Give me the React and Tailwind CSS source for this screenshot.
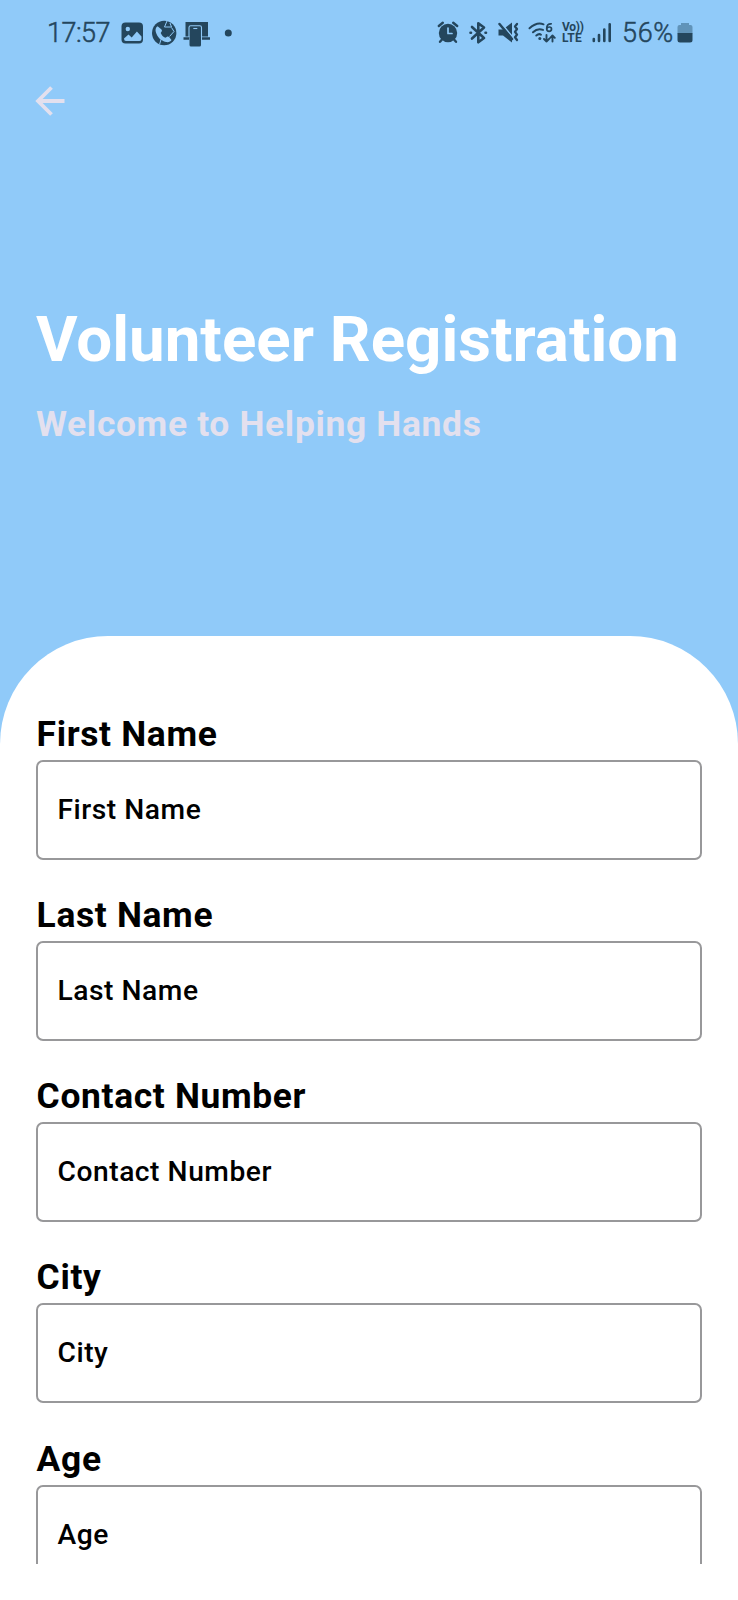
const fields = ['First Name', 'Last Name', 'Contact Number', 'City', 'Age'];

function NotificationIcons() {
  return (
    <svg className="h-[30px] w-[116px]" viewBox="120 18 116 30" fill="none">
      <rect x="121.5" y="22.500" width="21.500" height="21" rx="4" fill="#24465d" />
      <circle cx="127.800" cy="29" r="2.200" fill="#90caf9" />
      <path d="M124 38.500l4.500-4 3.200 3 5.200-6 4.600 5v2.500q0 2-2 2h-13.500q-2 0-2-2.500z" fill="#90caf9" />
      <circle cx="164.200" cy="33" r="12.200" fill="#24465d" />
      <path d="M160.300 28.400l-2.700-2.200c-2 1.300-2.400 3.400-1.800 5.800 1.400 5.200 5 8.700 10.200 10 2.400.5 4.500-.2 5.500-2l-2.400-2.900c-.6-.7-1.400-.8-2-.4l-1.700 1.100c-2.300-1-3.700-2.500-4.700-4.800l1.100-1.700c.4-.8.100-2-1.500-2.900z" fill="#90caf9" />
      <path d="M167 21l-2.500 6h7l-1.500-4M171.500 27.500l2.500 4-4.500 5M159.500 44.500l1.500-5" stroke="#90caf9" strokeWidth="1" />
      <path d="M185.500 22H208v14.500h-22.500zM183.500 37.300h5.500v2.400h-5.500zM202 37.300h8v2.400h-8z" fill="#24465d" />
      <rect x="189.500" y="25.800" width="11.500" height="20.700" rx="1.500" fill="#24465d" />
      <path d="M189 37v-9.500q0-1.700 1.700-1.700h9.100q1.700 0 1.700 1.700V37" stroke="#90caf9" strokeWidth="1.100" />
      <path d="M193.300 28.500h4" stroke="#90caf9" strokeWidth="1.100" />
      <circle cx="228.300" cy="33" r="3.500" fill="#24465d" />
    </svg>
  );
}

function SystemIcons() {
  return (
    <svg className="h-[30px] w-[120px]" viewBox="436 18 120 30" fill="none" stroke="#24465d" strokeLinecap="round" strokeLinejoin="round">
      <circle cx="448" cy="33" r="9.200" fill="#24465d" stroke="none" />
      <path d="M438.800 26l4-3.200M457.200 26l-4-3.200M442 39.500l-2 2.300M454 39.500l2 2.300" strokeWidth="2.400" />
      <path d="M448 28v5.500h4" stroke="#90caf9" strokeWidth="1.700" />
      <path d="M472 27l12 11-5.700 4.300V23.200L484 27.500l-12 11M470.500 32.800h.5M485.500 32.800h.5" strokeWidth="2.600" />
      <path d="M498.500 29.500h4.500l9-7v20l-9-7h-4.500z" fill="#24465d" stroke="none" />
      <path d="M501 23l12.500 15" stroke="#90caf9" strokeWidth="1.600" />
      <path d="M499.500 24l12.500 15" strokeWidth="2.500" />
      <path d="M517 24l-2 2.500 2 2.500-2 2.800 2 2.800-2 2.700 2 2.700" strokeWidth="2.300" />
      <path d="M529.500 28.300q7.500-6.800 14-4M533 32.200q4.500-4.300 10-2.300M536.300 35.500q2.700-2.300 4.700-.8" strokeWidth="2" />
      <circle cx="539.800" cy="38.500" r="1.500" fill="#24465d" stroke="none" />
      <path d="M551.200 23.800q-4.500-.2-4.500 4.900 0 2.600 2.400 2.600 2.400 0 2.400-2.300 0-2-2.200-2-1.700 0-2.500 1.500" strokeWidth="1.700" />
      <path d="M546.500 35v6.500m-2.500-2.500l2.500 2.500 2.500-2.500M552.500 41.500v-6m-2.300 2.300l2.300-2.300 2.300 2.300" strokeWidth="1.900" />
    </svg>
  );
}

function SignalIcon() {
  return (
    <svg className="h-[30px] w-5" viewBox="592 18 20 30" fill="none" stroke="#24465d" strokeWidth="2.600" strokeLinecap="round">
      <path d="M593.800 39v2M599 35v6M604.300 29.500V41M609.700 24.300V41" />
    </svg>
  );
}

function BatteryIcon() {
  return (
    <svg className="h-[30px] w-4" viewBox="677 18 16 30">
      <path d="M681 23h8v2h1.500q2 0 2 2v6.500h-15V27q0-2 2-2h1.500z" fill="#6093b9" />
      <path d="M677.500 33h15v7q0 2.500-2.500 2.500h-10q-2.500 0-2.500-2.500z" fill="#24465d" />
    </svg>
  );
}

function StatusBar() {
  return (
    <div className="flex h-[66px] items-center pr-[45px] pl-[47px] text-[#24465d]">
      <div className="w-[73px] text-[27px] font-light tracking-[-0.5px] [-webkit-text-stroke:0.5px]">17:57</div>
      <NotificationIcons />
      <div className="ml-auto flex items-center">
        <SystemIcons />
        <div className="ml-[6px] flex w-[24px] flex-col text-[12px] leading-[11.500px] font-bold">
          <span className="tracking-[-0.3px]">Vo))</span>
          <span className="tracking-[0.2px]">LTE</span>
        </div>
        <div className="ml-[6px] flex"><SignalIcon /></div>
        <div className="ml-[10px] w-[55px] text-[27px] font-light tracking-[0.700px] [-webkit-text-stroke:0.5px]">56%</div>
        <BatteryIcon />
      </div>
    </div>
  );
}

function Field({ label }) {
  return (
    <label className="flex h-[181.250px] shrink-0 flex-col">
      <span className="h-[48px] pl-[0.600px] text-[35.400px] leading-[44px] font-bold tracking-[0.650px]">{label}</span>
      <span className="flex h-[100px] items-center rounded-[7px] border-2 border-[#98989a] pl-[19.500px] text-[28.200px] font-medium tracking-[0.540px]">
        {label}
      </span>
    </label>
  );
}

export default function App() {
  return (
    <div className="flex h-[1600px] w-[738px] flex-col overflow-hidden bg-white font-[Roboto,sans-serif] text-black">
      <div className="flex h-[1564px] flex-col overflow-hidden bg-[#90caf9]">
        <header className="h-[635.500px] shrink-0">
          <StatusBar />
          <button className="mt-[19px] ml-[35px] flex" aria-label="Back">
            <svg className="h-8 w-8" viewBox="0 0 32 32" fill="none" stroke="#e3e0ee" strokeWidth="3.800">
              <path d="M29.500 16H3.500M16.500 2.500L3 16l13.500 13.500" />
            </svg>
          </button>
          <h1 className="mt-[183px] ml-9 text-[63.700px] leading-[80px] font-bold whitespace-nowrap text-white">Volunteer Registration</h1>
          <p className="mt-[20px] ml-9 text-[35.400px] leading-[48px] font-bold tracking-[0.660px] whitespace-nowrap text-[#e3e0ee]">Welcome to Helping Hands</p>
        </header>
        <main className="flex min-h-0 flex-1 flex-col overflow-hidden rounded-t-[108px] bg-white px-9 pt-[76.200px]">
          {fields.map((label) => <Field key={label} label={label} />)}
        </main>
      </div>
    </div>
  );
}
